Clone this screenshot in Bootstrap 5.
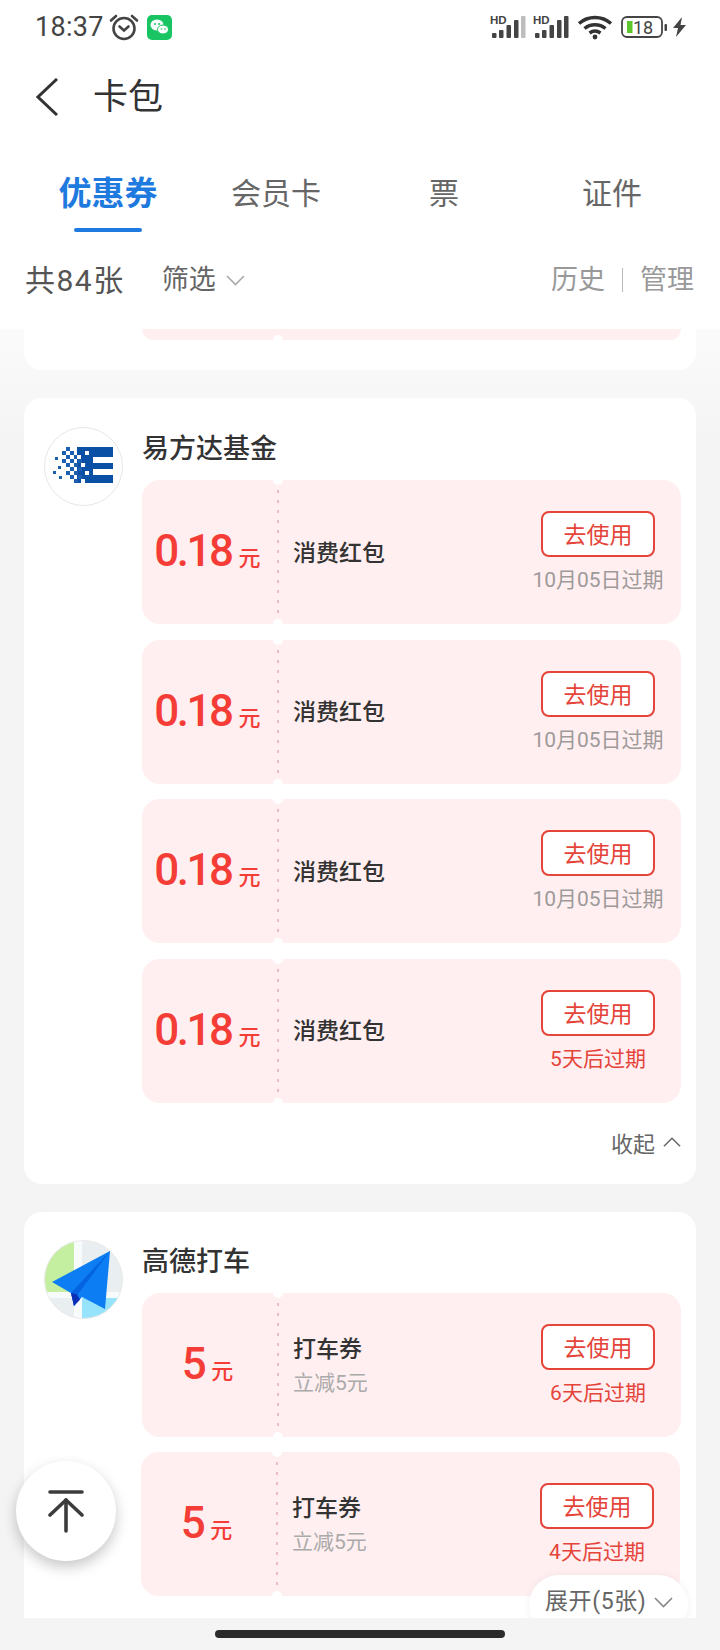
<!DOCTYPE html>
<html lang="zh">
<head>
  <meta charset="UTF-8">
  <meta name="viewport" content="width=device-width, initial-scale=1.0">
  <title>卡包</title>
  <link href="https://cdn.jsdelivr.net/npm/bootstrap@5.3.0/dist/css/bootstrap.min.css" rel="stylesheet">
  <style>
    body { font-family: Roboto, "Noto Sans CJK SC", sans-serif; background: #f4f4f4; color: #333; }
    .phone { width: 720px; height: 1650px; overflow: hidden; position: relative; }
    .head { height: 329px; background: #fff; }
    .status { height: 54px; padding: 0 34px 0 35px; }
    .clock { font-size: 27px; line-height: 1; color: #444; width: 66px; letter-spacing: .3px; }
    .sig-gap { margin-left: 7px; }
    .bolt-gap { margin-left: 6px; }
    .appbar { height: 86px; padding-left: 36px; }
    .appbar h1 { font-size: 35px; font-weight: 400; margin: 0 0 0 35px; color: #333; line-height: 1; }
    .tabs { padding: 0 24px; height: 68px; margin-top: 24px; }
    .tab-item { width: 168px; text-align: center; font-size: 30px; color: #666; line-height: 60px; position: relative; }
    .tab-item.on { font-size: 33px; font-weight: 700; color: #1f7ae0; }
    .tab-item.on::after { content: ""; position: absolute; left: 50px; bottom: 0; width: 68px; height: 4px; border-radius: 2px; background: #1f7ae0; }
    .filter { padding: 0 26px 0 25px; margin-top: 23px; height: 50px; }
    .total { font-size: 30px; color: #555; margin-right: 37px; letter-spacing: 1.500px; }
    .pick { font-size: 27px; color: #666; margin-right: 10px; }
    .side { font-size: 27px; color: #999; }
    .side-sep { width: 1px; height: 24px; background: #bbb; margin: 0 17px; }
    .scroller { height: 1289px; overflow: hidden; padding: 0 24px; background: linear-gradient(#fbfbfb, #f4f4f4 110px); }
    .group { background: #fff; border-radius: 18px; margin-bottom: 28px; position: relative; padding: 29px 15px 0 118px; }
    .group.cut { border-radius: 0 0 18px 18px; height: 41px; padding-top: 0; }
    .group.last { border-radius: 18px 18px 0 0; margin: 28px 0 0; padding-top: 28px; height: 420px; }
    .logo { position: absolute; left: 20px; top: 29px; width: 79px; height: 79px; }
    .group.last .logo { top: 28px; }
    .shop { font-size: 27px; font-weight: 500; color: #333; line-height: 44px; height: 53px; }
    .coupon { height: 144px; background: #ffeff0; border-radius: 18px; margin-bottom: 15.5px; position: relative; display: flex; }
    .coupon::before, .coupon::after { content: ""; position: absolute; left: 131px; width: 10px; height: 10px; border-radius: 50%; background: #fff; }
    .coupon::before { top: -5px; }
    .coupon::after { bottom: -5px; }
    .coupon.tail { height: 11px; border-radius: 0 0 18px 18px; margin: 0 0 30px; }
    .coupon.tail::before { display: none; }
    .coupon.nudge { margin-left: -1px; margin-right: 1px; }
    .stub { width: 135px; display: flex; align-items: baseline; justify-content: center; padding: 43px 4px 0 0; color: #f43d36; }
    .amount { font-size: 44px; font-weight: 500; line-height: 56px; letter-spacing: -2.500px; }
    .unit { font-size: 22px; font-weight: 500; margin-left: 7px; }
    .dash { width: 2px; margin: 10px 0; background: repeating-linear-gradient(#edbcc4 0 3px, transparent 3px 10px); }
    .info { flex: 1; padding: 3px 0 0 14px; display: flex; flex-direction: column; justify-content: center; }
    .name { font-size: 23px; font-weight: 500; color: #333; line-height: 30px; }
    .note { font-size: 21px; color: #aaa; line-height: 30px; margin-top: 3px; }
    .act { width: 140px; margin-right: 13px; text-align: center; padding-top: 31px; }
    .use { width: 114px; height: 46px; border: 2px solid #e5443a; border-radius: 8px; background: #fff; color: #e5443a; font-size: 23px; line-height: 38px; padding: 4px 0 0; }
    .due { font-size: 21px; line-height: 28px; margin-top: 9px; color: #9e9a9a; }
    .due.soon { color: #e5443a; }
    .fold { height: 81px; margin-top: -15.500px; padding-top: 25px; font-size: 22px; line-height: 34px; color: #666; justify-content: flex-end; }
    .foot { height: 32px; background: #f4f4f4; }
    .homebar { width: 290px; height: 8px; border-radius: 4px; background: #2b2b2b; margin: 12px auto 0; }
    .totop { position: absolute; left: 16px; top: 1461px; width: 100px; height: 100px; border-radius: 50%; background: #fff; box-shadow: 0 6px 14px rgba(0,0,0,.22); }
    .more { position: absolute; left: 529px; top: 1575px; width: 159px; height: 60px; border-radius: 30px; background: #fff; box-shadow: 0 0 8px rgba(0,0,0,.06); font-size: 23px; letter-spacing: .6px; color: #666; padding: 10px 0 0 16px; white-space: nowrap; }
    .clipper { position: absolute; left: 0; top: 0; width: 720px; height: 1618px; overflow: hidden; pointer-events: none; }
  </style>
</head>
<body>
<div class="phone">
  <div class="head">
    <div class="status d-flex align-items-center">
      <span class="clock">18:37</span>
      <svg class="ms-2" width="30" height="28" viewBox="0 0 30 28" fill="none" stroke="#444" stroke-width="2.6" stroke-linecap="round"><circle cx="15" cy="15.5" r="10.5"/><path d="M10.5 13.5l4.5 4 4.500-4"/><path d="M2 7.500l5-4.500M28 7.500l-5-4.500"/></svg>
      <svg class="ms-2" width="25" height="25" viewBox="0 0 25 25"><rect width="25" height="25" rx="5" fill="#19c463"/><ellipse cx="10" cy="10" rx="6.500" ry="5.500" fill="#fff"/><ellipse cx="16" cy="14.500" rx="5.500" ry="4.500" fill="#fff" stroke="#19c463"/><circle cx="8" cy="9" r="1" fill="#19c463"/><circle cx="12" cy="9" r="1" fill="#19c463"/><circle cx="14.500" cy="14" r=".8" fill="#19c463"/><circle cx="18" cy="14" r=".8" fill="#19c463"/></svg>
      <span class="flex-grow-1"></span>
      <svg width="36" height="26" viewBox="0 0 36 26" fill="#444"><text x="0" y="9.500" font-family="Liberation Sans" font-size="11.500" font-weight="700">HD</text><rect x="2" y="19" width="4.500" height="5" rx="1"/><rect x="9" y="16" width="4.500" height="8" rx="1"/><rect x="16.500" y="11" width="4.500" height="13" rx="1"/><rect x="24" y="6" width="4.500" height="18" rx="1"/><rect x="31" y="2" width="4.500" height="22" rx="1" fill="#bdbdbd"/></svg>
      <svg class="sig-gap" width="36" height="26" viewBox="0 0 36 26" fill="#444"><text x="0" y="9.500" font-family="Liberation Sans" font-size="11.500" font-weight="700">HD</text><rect x="2" y="19" width="4.500" height="5" rx="1"/><rect x="9" y="16" width="4.500" height="8" rx="1"/><rect x="16.500" y="11" width="4.500" height="13" rx="1"/><rect x="24" y="6" width="4.500" height="18" rx="1"/><rect x="31" y="2" width="4.500" height="22" rx="1"/></svg>
      <svg class="ms-2" width="36" height="26" viewBox="0 0 36 26" fill="none" stroke="#333" stroke-width="3.400"><path d="M2 9.500C11 1.500 25 1.500 34 9.500"/><path d="M7.500 14.500C13.500 9.500 22.500 9.500 28.500 14.500"/><path d="M12.500 19C16 16.500 20 16.500 23.500 19"/><circle cx="18" cy="23" r="2.400" fill="#333" stroke="none"/></svg>
      <svg class="ms-2" width="46" height="24" viewBox="0 0 46 24"><rect x="1" y="2" width="40" height="20" rx="5" fill="none" stroke="#444" stroke-width="1.800"/><rect x="6" y="6" width="5.500" height="12" fill="#5cc62c"/><text x="12" y="18.500" font-family="Roboto" font-size="18" fill="#444">18</text><rect x="43.500" y="9" width="2.500" height="7" rx="1" fill="#444"/></svg>
      <svg class="bolt-gap" width="13" height="20" viewBox="0 0 13 20" fill="#444"><path d="M9 0L0 11h5l-2 9 10-12H7.500z"/></svg>
    </div>
    <div class="appbar d-flex align-items-center">
      <svg width="22" height="38" viewBox="0 0 22 38" fill="none" stroke="#333" stroke-width="3"><path d="M21 1L2 19l19 18"/></svg>
      <h1>卡包</h1>
    </div>
    <div class="tabs d-flex">
      <div class="tab-item on">优惠券</div>
      <div class="tab-item">会员卡</div>
      <div class="tab-item">票</div>
      <div class="tab-item">证件</div>
    </div>
    <div class="filter d-flex align-items-center">
      <span class="total">共84张</span>
      <span class="pick">筛选</span>
      <svg width="19" height="11" viewBox="0 0 19 11" fill="none" stroke="#aaa" stroke-width="1.600"><path d="M1 1l8.500 8.500L18 1"/></svg>
      <span class="flex-grow-1"></span>
      <span class="side">历史</span>
      <span class="side-sep"></span>
      <span class="side">管理</span>
    </div>
  </div>

  <div class="scroller">
    <div class="group cut">
      <div class="coupon tail"></div>
    </div>

    <div class="group">
      <svg class="logo" viewBox="0 0 79 79">
        <circle cx="39.500" cy="39.500" r="39" fill="#fff" stroke="#e6e6e6"/>
        <path d="M33 20h36v10H49v6h20v6H49v6h20v8H33z" fill="#0a50a4"/>
        <g fill="#1c5fae">
          <rect x="22" y="20" width="4" height="4"/><rect x="18" y="24" width="4" height="4"/><rect x="26" y="24" width="4" height="4"/>
          <rect x="22" y="28" width="4" height="4"/><rect x="30" y="28" width="4" height="4"/><rect x="18" y="32" width="4" height="4"/>
          <rect x="26" y="32" width="4" height="4"/><rect x="34" y="32" width="4" height="4"/><rect x="22" y="36" width="4" height="4"/>
          <rect x="30" y="36" width="4" height="4"/><rect x="38" y="36" width="4" height="4"/><rect x="26" y="40" width="4" height="4"/>
          <rect x="34" y="40" width="4" height="4"/><rect x="22" y="44" width="4" height="4"/><rect x="30" y="44" width="4" height="4"/>
          <rect x="26" y="48" width="4" height="4"/><rect x="34" y="48" width="4" height="4"/><rect x="30" y="52" width="4" height="4"/>
          <rect x="11" y="30" width="3" height="3"/><rect x="14" y="39" width="3" height="3"/><rect x="9" y="44" width="3" height="3"/><rect x="15" y="49" width="3" height="3"/>
        </g>
        <g fill="#fff"><rect x="33" y="28" width="4" height="4"/><rect x="37" y="36" width="4" height="4"/><rect x="41" y="44" width="4" height="4"/><rect x="37" y="52" width="4" height="4"/><rect x="41" y="24" width="4" height="4"/></g>
      </svg>
      <div class="shop">易方达基金</div>
      <div class="coupon"><div class="stub"><span class="amount">0.18</span><span class="unit">元</span></div><div class="dash"></div><div class="info"><div class="name">消费红包</div></div><div class="act"><button class="btn use">去使用</button><div class="due">10月05日过期</div></div></div>
      <div class="coupon"><div class="stub"><span class="amount">0.18</span><span class="unit">元</span></div><div class="dash"></div><div class="info"><div class="name">消费红包</div></div><div class="act"><button class="btn use">去使用</button><div class="due">10月05日过期</div></div></div>
      <div class="coupon"><div class="stub"><span class="amount">0.18</span><span class="unit">元</span></div><div class="dash"></div><div class="info"><div class="name">消费红包</div></div><div class="act"><button class="btn use">去使用</button><div class="due">10月05日过期</div></div></div>
      <div class="coupon"><div class="stub"><span class="amount">0.18</span><span class="unit">元</span></div><div class="dash"></div><div class="info"><div class="name">消费红包</div></div><div class="act"><button class="btn use">去使用</button><div class="due soon">5天后过期</div></div></div>
      <div class="fold d-flex">
        <span>收起</span>
        <svg class="ms-2 mt-2" width="18" height="12" viewBox="0 0 19 12" fill="none" stroke="#666" stroke-width="1.600"><path d="M1 10.500L9.500 2 18 10.500"/></svg>
      </div>
    </div>

    <div class="group last">
      <svg class="logo" viewBox="0 0 79 79">
        <defs><clipPath id="amapClip"><circle cx="39.500" cy="39.500" r="39"/></clipPath></defs>
        <g clip-path="url(#amapClip)">
          <rect width="79" height="79" fill="#e9eef0"/>
          <rect width="30" height="52" fill="#c5efa0"/>
          <rect x="38" y="58" width="41" height="21" fill="#97e3fb"/>
          <rect x="30" width="8" height="79" fill="#f8fbfc"/>
          <rect y="52" width="79" height="6" fill="#f8fbfc"/>
        </g>
        <circle cx="39.500" cy="39.500" r="39" fill="none" stroke="#e8e8e8"/>
        <path d="M66 11L8 42l19 11 3 13 8-9 23 12z" fill="#0c7df2"/>
        <path d="M66 11L27 53l3 13 4-12z" fill="#0562e0"/>
        <path d="M27 53l3 13 6-6.500-3-5z" fill="#0a2fb4"/>
      </svg>
      <div class="shop">高德打车</div>
      <div class="coupon"><div class="stub"><span class="amount">5</span><span class="unit">元</span></div><div class="dash"></div><div class="info"><div class="name">打车券</div><div class="note">立减5元</div></div><div class="act"><button class="btn use">去使用</button><div class="due soon">6天后过期</div></div></div>
      <div class="coupon nudge"><div class="stub"><span class="amount">5</span><span class="unit">元</span></div><div class="dash"></div><div class="info"><div class="name">打车券</div><div class="note">立减5元</div></div><div class="act"><button class="btn use">去使用</button><div class="due soon">4天后过期</div></div></div>
    </div>
  </div>

  <div class="foot"><div class="homebar"></div></div>

  <div class="totop d-flex align-items-center justify-content-center">
    <svg width="36" height="44" viewBox="0 0 36 44" fill="none" stroke="#3c3c3c" stroke-width="3.600" stroke-linecap="round" stroke-linejoin="round"><path d="M2 3h32"/><path d="M18 42V11"/><path d="M2 26L18 11l16 15"/></svg>
  </div>
  <div class="clipper">
    <div class="more">展开(5张)<svg class="ms-2" width="19" height="11" viewBox="0 0 19 11" fill="none" stroke="#888" stroke-width="1.600"><path d="M1 1l8.500 8.500L18 1"/></svg></div>
  </div>
</div>
<script src="https://cdn.jsdelivr.net/npm/bootstrap@5.3.0/dist/js/bootstrap.bundle.min.js"></script>
</body>
</html>
